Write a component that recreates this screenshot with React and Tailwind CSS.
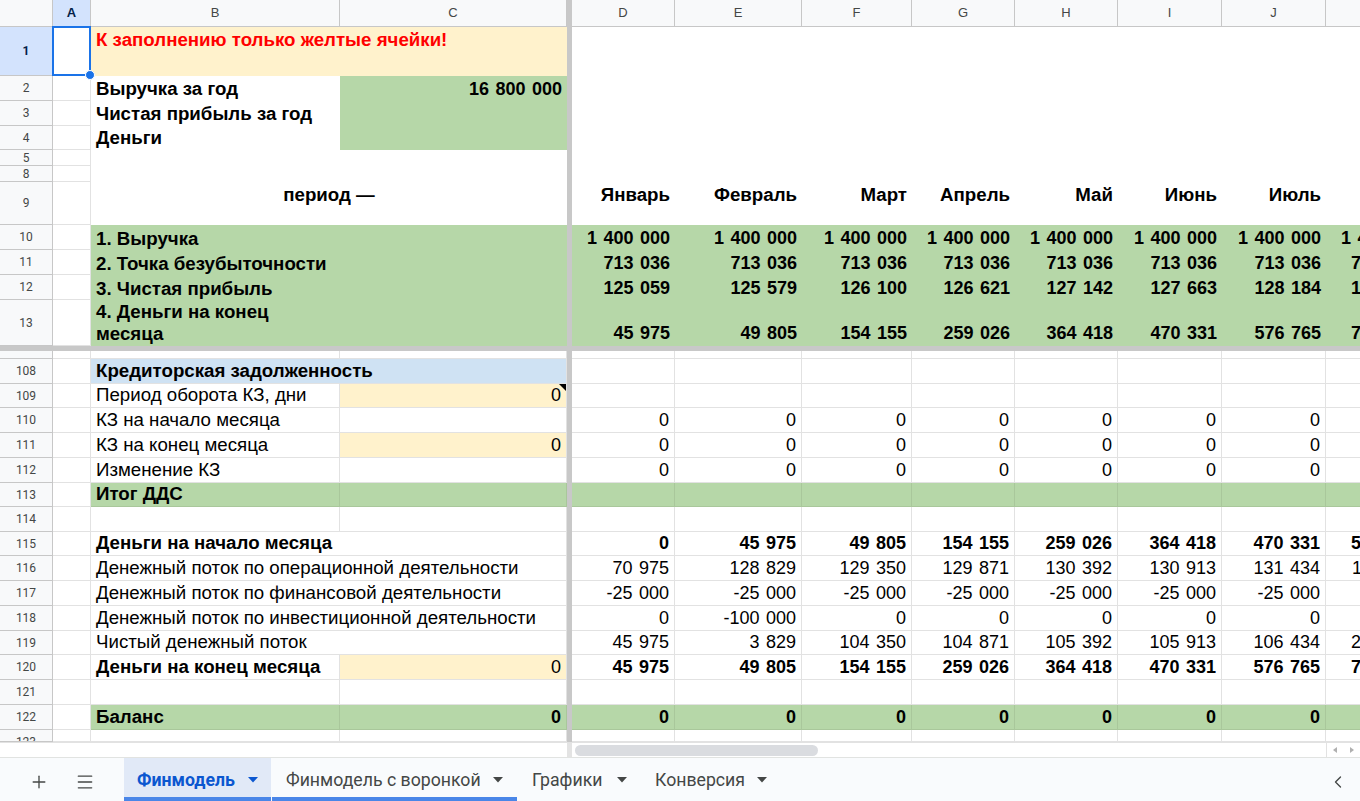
import React from 'react';
import { Plus, Menu, ChevronLeft } from 'lucide-react';

const COLS = ['w-[103px]', 'w-[127px]', 'w-[110px]', 'w-[103px]', 'w-[103px]', 'w-[104px]', 'w-[104px]'];
const LETTERS = ['D', 'E', 'F', 'G', 'H', 'I', 'J'];
const LBL = 'text-[18.7px]';
const NUM = '[word-spacing:1.5px]';

function RH({ n, sel, clip }) {
  return (
    <div
      className={`w-[53px] shrink-0 overflow-hidden flex ${clip ? 'items-start' : 'items-center'} justify-center border-r border-b border-[#c7c7c7] text-[12px] font-['Roboto',Arial,sans-serif] ${
        sel ? 'bg-[#d3e3fd] text-[#041e49] font-bold' : 'bg-[#f8f9fa] text-[#444746]'
      }`}
    >
      <span className={clip ? 'leading-[25px] h-[25px] block shrink-0' : ''}>{n}</span>
    </div>
  );
}

function Divider() {
  return <div className="w-[5px] shrink-0 bg-[#c8c8c8]" />;
}

function Vals({ vals = [], k, kPad = 'pl-[24px]', bold, bg = '', grid, top, label }) {
  const b = grid ? `border-r border-b ${grid}` : '';
  const va = top ? 'items-start pt-[3px]' : 'items-end pb-[2px]';
  const t = label ? LBL : NUM;
  return (
    <>
      {COLS.map((w, i) => (
        <div key={i} className={`${w} shrink-0 flex justify-end px-[5px] ${va} ${b} ${bg} ${bold ? 'font-bold' : ''}`}>
          <span className={`whitespace-nowrap ${t}`}>{vals[i] ?? ''}</span>
        </div>
      ))}
      <div className={`w-[120px] shrink-0 flex ${kPad} ${va} ${b} ${bg} ${bold ? 'font-bold' : ''}`}>
        <span className={`whitespace-nowrap ${t}`}>{k ?? ''}</span>
      </div>
    </>
  );
}

function ACell({ grid = true }) {
  return <div className={`w-[38px] shrink-0 ${grid ? 'border-r border-b border-[#e2e2e2]' : ''}`} />;
}

function BRow({ n, h, b, bBold, bFill = '', merged, c, cFill = '', cBold, note, noBR, vals, vBold, k, kPad, green, clip }) {
  const grid = green ? 'border-[#a9c79b]' : 'border-[#e2e2e2]';
  const g = green ? 'bg-[#b6d7a8]' : '';
  return (
    <div className={`${h} flex shrink-0`}>
      <RH n={n} clip={clip} />
      <ACell />
      {merged ? (
        <div className={`w-[476px] shrink-0 flex items-end pb-[2px] px-[5px] border-r border-b ${grid} ${bFill} ${g} ${bBold ? 'font-bold' : ''}`}>
          <span className={`whitespace-nowrap ${LBL}`}>{b}</span>
        </div>
      ) : (
        <>
          <div className={`w-[249px] shrink-0 flex items-end pb-[2px] px-[5px] border-b ${noBR ? '' : 'border-r'} ${grid} ${g} ${bBold ? 'font-bold' : ''}`}>
            <span className={`whitespace-nowrap ${LBL}`}>{b}</span>
          </div>
          <div className={`w-[227px] shrink-0 relative flex items-end justify-end pb-[2px] px-[5px] border-r border-b ${grid} ${g} ${cFill} ${cBold ? 'font-bold' : ''}`}>
            <span className="whitespace-nowrap">{c}</span>
            {note && <div className="absolute top-0 right-0 w-0 h-0 border-t-[7px] border-l-[7px] border-t-black border-l-transparent" />}
          </div>
        </>
      )}
      <Divider />
      <Vals vals={vals} k={k} kPad={kPad} bold={vBold} bg={g} grid={grid} />
    </div>
  );
}

function Caret({ active }) {
  return (
    <svg width="10" height="6" viewBox="0 0 10 6" className="shrink-0">
      <path d="M0 0 L10 0 L5 5.5 Z" fill={active ? '#0b57d0' : '#444746'} />
    </svg>
  );
}

export default function App() {
  const months = ['Январь', 'Февраль', 'Март', 'Апрель', 'Май', 'Июнь', 'Июль'];
  const r10 = Array(7).fill('1 400 000');
  const r11 = Array(7).fill('713 036');
  const r12 = ['125 059', '125 579', '126 100', '126 621', '127 142', '127 663', '128 184'];
  const r13 = ['45 975', '49 805', '154 155', '259 026', '364 418', '470 331', '576 765'];
  const zeros = Array(7).fill('0');

  return (
    <div className="w-[1360px] h-[801px] overflow-hidden flex flex-col bg-white text-black text-[18px] leading-[20px] font-['Liberation_Sans',Arial,sans-serif]">
      {/* column headers */}
      <div className="h-[27px] flex shrink-0 text-[13px] text-[#444746]">
        <div className="w-[53px] shrink-0 bg-[#f8f9fa] border-r border-b border-[#c7c7c7]" />
        <div className="w-[38px] shrink-0 flex items-center justify-center bg-[#d3e3fd] text-[#041e49] font-bold border-r border-b border-[#c7c7c7]">A</div>
        <div className="w-[249px] shrink-0 flex items-center justify-center bg-[#f8f9fa] border-r border-b border-[#c7c7c7]">B</div>
        <div className="w-[227px] shrink-0 flex items-center justify-center bg-[#f8f9fa] border-r border-b border-[#c7c7c7]">C</div>
        <Divider />
        {COLS.map((w, i) => (
          <div key={i} className={`${w} shrink-0 flex items-center justify-center bg-[#f8f9fa] border-r border-b border-[#c7c7c7]`}>
            {LETTERS[i]}
          </div>
        ))}
        <div className="w-[120px] shrink-0 bg-[#f8f9fa] border-b border-[#c7c7c7]" />
      </div>

      {/* row 1 */}
      <div className="h-[49px] flex shrink-0">
        <RH n="1" sel />
        <div className="w-[38px] shrink-0 relative border-r border-b border-[#e2e2e2]">
          <div className="absolute -left-px -top-px w-[39px] h-[50px] border-2 border-[#1a73e8]" />
          <div className="absolute -right-[5px] -bottom-[5px] w-[10px] h-[10px] rounded-full bg-[#1a73e8] border border-white" />
        </div>
        <div className="w-[476px] shrink-0 flex items-start pt-[3px] px-[5px] bg-[#fff2cc] text-[#ff0000] font-bold">
          <span className={`whitespace-nowrap ${LBL}`}>К заполнению только желтые ячейки!</span>
        </div>
        <Divider />
        <div className="flex-1" />
      </div>

      {/* rows 2-4 */}
      {[
        ['2', 'h-[25px]', 'Выручка за год', '16 800 000'],
        ['3', 'h-[25px]', 'Чистая прибыль за год', ''],
        ['4', 'h-[24px]', 'Деньги', ''],
      ].map(([n, h, label, val]) => (
        <div key={n} className={`${h} flex shrink-0`}>
          <RH n={n} />
          <ACell />
          <div className="w-[249px] shrink-0 flex items-end pb-[2px] px-[5px] font-bold">
            <span className={`whitespace-nowrap ${LBL}`}>{label}</span>
          </div>
          <div className="w-[227px] shrink-0 flex items-end justify-end pb-[2px] px-[5px] bg-[#b6d7a8] font-bold">
            <span className={`whitespace-nowrap ${NUM}`}>{val}</span>
          </div>
          <Divider />
          <div className="flex-1" />
        </div>
      ))}

      {/* rows 5, 8 */}
      {['5', '8'].map((n) => (
        <div key={n} className="h-[16px] flex shrink-0">
          <RH n={n} />
          <ACell />
          <div className="w-[476px] shrink-0" />
          <Divider />
          <div className="flex-1" />
        </div>
      ))}

      {/* row 9 */}
      <div className="h-[43px] flex shrink-0">
        <RH n="9" />
        <ACell />
        <div className="w-[476px] shrink-0 flex items-start justify-center pt-[3px] px-[5px] font-bold">
          <span className={`whitespace-nowrap ${LBL}`}>период —</span>
        </div>
        <Divider />
        <Vals vals={months} k="" bold top label />
      </div>

      {/* rows 10-12 */}
      {[
        ['10', '1. Выручка', r10, '1 400 000', 'pl-[15px]'],
        ['11', '2. Точка безубыточности', r11, '713 036', 'pl-[25px]'],
        ['12', '3. Чистая прибыль', r12, '128 705', 'pl-[25px]'],
      ].map(([n, label, vals, k, kp]) => (
        <div key={n} className="h-[25px] flex shrink-0">
          <RH n={n} />
          <ACell />
          <div className="w-[476px] shrink-0 flex items-end pb-[1px] px-[5px] bg-[#b6d7a8] font-bold">
            <span className={`whitespace-nowrap ${LBL}`}>{label}</span>
          </div>
          <Divider />
          <Vals vals={vals} k={k} kPad={kp} bold bg="bg-[#b6d7a8]" />
        </div>
      ))}

      {/* row 13 */}
      <div className="h-[46px] flex shrink-0 leading-[22px]">
        <RH n="13" />
        <ACell />
        <div className={`w-[476px] shrink-0 flex flex-col justify-end pb-[1px] px-[5px] bg-[#b6d7a8] font-bold ${LBL}`}>
          <span className="whitespace-nowrap">4. Деньги на конец</span>
          <span className="whitespace-nowrap">месяца</span>
        </div>
        <Divider />
        <Vals vals={r13} k="783 720" kPad="pl-[25px]" bold bg="bg-[#b6d7a8]" />
      </div>

      {/* frozen horizontal divider */}
      <div className="h-[5px] shrink-0 bg-[#c8c8c8]" />

      {/* partial row 107 */}
      <div className="h-[8px] flex shrink-0">
        <RH n="" />
        <ACell />
        <div className="w-[249px] shrink-0 border-r border-b border-[#e2e2e2]" />
        <div className="w-[227px] shrink-0 border-r border-b border-[#e2e2e2]" />
        <Divider />
        <Vals grid="border-[#e2e2e2]" />
      </div>

      <BRow n="108" h="h-[25px]" merged b="Кредиторская задолженность" bBold bFill="bg-[#cfe2f3]" />
      <BRow n="109" h="h-[24px]" b="Период оборота КЗ, дни" c="0" cFill="bg-[#fff2cc]" note />
      <BRow n="110" h="h-[25px]" b="КЗ на начало месяца" vals={zeros} />
      <BRow n="111" h="h-[25px]" b="КЗ на конец месяца" c="0" cFill="bg-[#fff2cc]" vals={zeros} />
      <BRow n="112" h="h-[25px]" b="Изменение КЗ" vals={zeros} />
      <BRow n="113" h="h-[24px]" b="Итог ДДС" bBold green />
      <BRow n="114" h="h-[25px]" />
      <BRow
        n="115"
        h="h-[24px]"
        b="Деньги на начало месяца"
        bBold
        noBR
        vals={['0', '45 975', '49 805', '154 155', '259 026', '364 418', '470 331']}
        vBold
        k="576 765"
        kPad="pl-[25px]"
      />
      <BRow
        n="116"
        h="h-[25px]"
        b="Денежный поток по операционной деятельности"
        noBR
        vals={['70 975', '128 829', '129 350', '129 871', '130 392', '130 913', '131 434']}
        k="131 955"
        kPad="pl-[26px]"
      />
      <BRow n="117" h="h-[25px]" b="Денежный поток по финансовой деятельности" noBR vals={Array(7).fill('-25 000')} />
      <BRow n="118" h="h-[25px]" b="Денежный поток по инвестиционной деятельности" noBR vals={['0', '-100 000', '0', '0', '0', '0', '0']} />
      <BRow
        n="119"
        h="h-[24px]"
        b="Чистый денежный поток"
        noBR
        vals={['45 975', '3 829', '104 350', '104 871', '105 392', '105 913', '106 434']}
        k="206 955"
        kPad="pl-[25px]"
      />
      <BRow
        n="120"
        h="h-[25px]"
        b="Деньги на конец месяца"
        bBold
        c="0"
        cFill="bg-[#fff2cc]"
        vals={r13}
        vBold
        k="783 720"
        kPad="pl-[25px]"
      />
      <BRow n="121" h="h-[25px]" />
      <BRow n="122" h="h-[25px]" b="Баланс" bBold c="0" cBold vals={zeros} vBold green />
      <BRow n="123" h="h-[12px]" clip />

      {/* horizontal scrollbar */}
      <div className="h-[15px] shrink-0 flex border-t border-[#e2e2e2]">
        <div className="w-[567px] shrink-0 bg-white" />
        <div className="w-[5px] shrink-0 bg-[#e3e3e3]" />
        <div className="flex-1 flex items-center pl-[3px]">
          <div className="w-[243px] h-[11px] rounded-full bg-[#dadce0]" />
        </div>
        <div className="w-[34px] shrink-0 flex items-center justify-around border-l border-[#e2e2e2]">
          <svg width="4" height="6" viewBox="0 0 4 6"><path d="M4 0 L0 3 L4 6 Z" fill="#b0b0b0" /></svg>
          <svg width="4" height="6" viewBox="0 0 4 6"><path d="M0 0 L4 3 L0 6 Z" fill="#b0b0b0" /></svg>
        </div>
      </div>

      {/* tab bar */}
      <div className="h-[44px] shrink-0 flex items-stretch bg-[#f9fbfd] border-t border-[#e1e3e1] font-['Roboto',Arial,sans-serif] text-[17.7px] text-[#444746]">
        <div className="w-[124px] shrink-0 flex items-center pl-[29px] pt-[4px]">
          <Plus size={20} strokeWidth={1.6} color="#444746" />
          <div className="ml-[26px] flex">
            <Menu size={20} strokeWidth={1.6} color="#444746" />
          </div>
        </div>
        <div className="w-[147px] shrink-0 flex items-center justify-between px-[13px] pt-[4px] bg-[#e1e9f7] border-b-[4px] border-[#4a86e8] text-[#0b57d0] font-bold">
          <span className="whitespace-nowrap">Финмодель</span>
          <Caret active />
        </div>
        <div className="w-[245px] ml-[1px] shrink-0 flex items-center justify-between px-[14px] pt-[4px] border-b-[4px] border-[#4a86e8]">
          <span className="whitespace-nowrap">Финмодель с воронкой</span>
          <Caret />
        </div>
        <div className="w-[123px] ml-[1px] shrink-0 flex items-center justify-between px-[14px] pt-[4px] border-b-[4px] border-transparent">
          <span className="whitespace-nowrap">Графики</span>
          <Caret />
        </div>
        <div className="w-[140px] shrink-0 flex items-center justify-between px-[14px] pt-[4px] border-b-[4px] border-transparent">
          <span className="whitespace-nowrap">Конверсия</span>
          <Caret />
        </div>
        <div className="flex-1" />
        <div className="w-[36px] shrink-0 flex items-center justify-center pt-[4px] mr-[4px]">
          <ChevronLeft size={20} strokeWidth={1.6} color="#444746" />
        </div>
      </div>
    </div>
  );
}
